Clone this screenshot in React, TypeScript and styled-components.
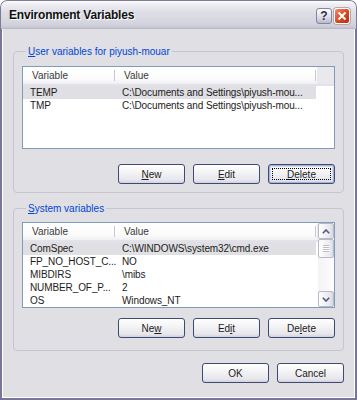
import styled, { createGlobalStyle } from 'styled-components';

const GlobalStyle = createGlobalStyle`
    html, body {
        margin: 0;
        padding: 0;
        background: #ffffff;
    }
    body {
        font-family: "Liberation Sans", Arial, sans-serif;
        font-size: 10px;
        color: #1c1c1c;
    }
    * {
        box-sizing: border-box;
    }
`;

interface IVariable {
    name: string;
    value: string;
}

const userVars: IVariable[] = [
    { name: 'TEMP', value: 'C:\\Documents and Settings\\piyush-mou...' },
    { name: 'TMP', value: 'C:\\Documents and Settings\\piyush-mou...' },
];

const systemVars: IVariable[] = [
    { name: 'ComSpec', value: 'C:\\WINDOWS\\system32\\cmd.exe' },
    { name: 'FP_NO_HOST_C...', value: 'NO' },
    { name: 'MIBDIRS', value: '\\mibs' },
    { name: 'NUMBER_OF_P...', value: '2' },
    { name: 'OS', value: 'Windows_NT' },
];

const Chevron = ({ down }: { down?: boolean }) => (
    <svg width="8" height="5" viewBox="0 0 8 5">
        <path
            d={down ? 'M0.8 0.8 L4 4 L7.2 0.8' : 'M0.8 4.2 L4 1 L7.2 4.2'}
            stroke="#4a5a80"
            strokeWidth="1.6"
            fill="none"
        />
    </svg>
);

interface IListProps {
    rows: IVariable[];
    height: number;
    scroll?: boolean;
}

const VariableList = ({ rows, height, scroll }: IListProps) => (
    <ListView $height={height}>
        <ListMain>
            <ListHeader>
                <HeaderCell $width={92}>Variable</HeaderCell>
                <HeaderCell $width={201}>Value</HeaderCell>
                <HeaderFiller />
            </ListHeader>
            {rows.map((row, i) => (
                <Row key={row.name} $selected={i === 0}>
                    <Cell $width={92}>{row.name}</Cell>
                    <Cell $width={201}>{row.value}</Cell>
                </Row>
            ))}
        </ListMain>
        {scroll && (
            <Scrollbar>
                <ScrollButton>
                    <Chevron />
                </ScrollButton>
                <ScrollThumb>
                    <Grip />
                </ScrollThumb>
                <ScrollTrack />
                <ScrollButton>
                    <Chevron down />
                </ScrollButton>
            </Scrollbar>
        )}
    </ListView>
);

export default function App() {
    return (
        <>
            <GlobalStyle />
            <Window>
                <TitleBar>
                    <TitleText>Environment Variables</TitleText>
                    <TitleButtons>
                        <HelpButton>?</HelpButton>
                        <CloseButton>
                            <svg width="10" height="10" viewBox="0 0 10 10">
                                <path
                                    d="M1.5 1.5 L8.5 8.5 M8.5 1.5 L1.5 8.5"
                                    stroke="#ffffff"
                                    strokeWidth="2"
                                />
                            </svg>
                        </CloseButton>
                    </TitleButtons>
                </TitleBar>
                <Frame>
                    <GroupBox $mt={16} $pt={8} $pb={8}>
                        <Legend>
                            <u>U</u>ser variables for piyush-mouar
                        </Legend>
                        <VariableList rows={userVars} height={83} />
                        <ButtonRow $mt={15}>
                            <Button>
                                <u>N</u>ew
                            </Button>
                            <Button>
                                <u>E</u>dit
                            </Button>
                            <Button $focused>
                                <u>D</u>elete
                            </Button>
                        </ButtonRow>
                    </GroupBox>
                    <GroupBox $mt={9} $pt={7} $pb={12}>
                        <Legend>
                            <u>S</u>ystem variables
                        </Legend>
                        <VariableList rows={systemVars} height={86} scroll />
                        <ButtonRow $mt={10}>
                            <Button>
                                Ne<u>w</u>
                            </Button>
                            <Button>
                                Ed<u>i</u>t
                            </Button>
                            <Button>
                                De<u>l</u>ete
                            </Button>
                        </ButtonRow>
                    </GroupBox>
                    <ButtonRow $mt={12}>
                        <Button>OK</Button>
                        <Button>Cancel</Button>
                    </ButtonRow>
                </Frame>
            </Window>
        </>
    );
}

const Window = styled.div`
    width: 357px;
    height: 400px;
    display: flex;
    flex-direction: column;
    border-radius: 7px 7px 0 0;
    overflow: hidden;
    background: #e0dfe3;
`;

const TitleBar = styled.div`
    height: 29px;
    flex: none;
    display: flex;
    align-items: center;
    justify-content: space-between;
    padding: 0 6px 0 8px;
    border: 1px solid #7c7c99;
    border-bottom: none;
    border-radius: 7px 7px 0 0;
    background: linear-gradient(
        to bottom,
        #ffffff 0%,
        #eeeef3 12%,
        #dedee6 40%,
        #d6d6df 75%,
        #cdcdd8 92%,
        #b4b4c6 100%
    );
`;

const TitleText = styled.span`
    font-family: "Liberation Sans", Arial, sans-serif;
    font-weight: bold;
    font-size: 12px;
    letter-spacing: -0.2px;
    color: #111111;
    text-shadow: 1px 1px 0 #ffffff;
`;

const TitleButtons = styled.div`
    display: flex;
    gap: 2px;
    margin-top: 1px;
`;

const HelpButton = styled.div`
    width: 16px;
    height: 16px;
    border: 1px solid #8585a2;
    border-radius: 3px;
    background: linear-gradient(to bottom, #ffffff, #dcdce8 60%, #b9b9cc);
    color: #2e2e4a;
    font-weight: bold;
    font-size: 12px;
    line-height: 14px;
    text-align: center;
`;

const CloseButton = styled.div`
    width: 16px;
    height: 16px;
    display: flex;
    align-items: center;
    justify-content: center;
    border: 1px solid #ffffff;
    border-radius: 3px;
    background: linear-gradient(135deg, #f08c6c, #d9471f 55%, #b82d10);
    box-shadow: 0 0 0 1px #b3a9ac;
`;

const Frame = styled.div`
    flex: 1;
    display: flex;
    flex-direction: column;
    padding: 0 11px;
    border: 2px solid #76769a;
    border-top: none;
    box-shadow: inset 1px 0 0 #ffffff, inset -1px -1px 0 #ffffff;
    background: #e0dfe3;
`;

const GroupBox = styled.fieldset<{ $mt: number; $pt: number; $pb: number }>`
    margin: ${(p) => p.$mt}px 0 0 0;
    padding: ${(p) => p.$pt}px 8px ${(p) => p.$pb}px 8px;
    min-width: 0;
    border: 1px solid #c5c4cf;
    border-radius: 4px;
    display: flex;
    flex-direction: column;
`;

const Legend = styled.legend`
    padding: 0 2px;
    margin-left: 4px;
    line-height: 13px;
    color: #0046d5;
`;

const ListView = styled.div<{ $height: number }>`
    height: ${(p) => p.$height}px;
    display: flex;
    border: 1px solid #7f9db9;
    background: #ffffff;
    overflow: hidden;
`;

const ListMain = styled.div`
    flex: 1;
    min-width: 0;
    display: flex;
    flex-direction: column;
`;

const ListHeader = styled.div`
    height: 19px;
    flex: none;
    display: flex;
    background: linear-gradient(to bottom, #ffffff 0%, #fbfbfc 70%, #f0f0f4 100%);
    border-bottom: 2px solid #e2e2ea;
    color: #3a3a3a;
`;

const HeaderCell = styled.div<{ $width: number }>`
    width: ${(p) => p.$width}px;
    flex: none;
    position: relative;
    padding-left: 9px;
    line-height: 17px;
    white-space: nowrap;
    overflow: hidden;

    &::after {
        content: '';
        position: absolute;
        right: 0;
        top: 3px;
        bottom: 3px;
        width: 1px;
        background: #c7c6d2;
        box-shadow: 1px 0 0 #ffffff;
    }
`;

const HeaderFiller = styled.div`
    flex: 1;
    margin-left: 1px;
    background: #e8e8ed;
`;

const Row = styled.div<{ $selected?: boolean }>`
    width: 293px;
    height: 13px;
    display: flex;
    background: ${(p) => (p.$selected ? '#e0dfe3' : 'transparent')};
`;

const Cell = styled.div<{ $width: number }>`
    width: ${(p) => p.$width}px;
    flex: none;
    padding-left: 7px;
    line-height: 13px;
    letter-spacing: -0.1px;
    white-space: nowrap;
`;

const Scrollbar = styled.div`
    width: 16px;
    flex: none;
    display: flex;
    flex-direction: column;
    background: linear-gradient(to right, #f3f3f6, #fdfdfe);
`;

const ScrollButton = styled.div`
    height: 16px;
    flex: none;
    display: flex;
    align-items: center;
    justify-content: center;
    border: 1px solid #b9b8c9;
    border-radius: 2px;
    background: linear-gradient(to right, #ffffff, #e9e9f0 70%, #d8d8e2);
`;

const ScrollThumb = styled.div`
    height: 19px;
    flex: none;
    display: flex;
    align-items: center;
    justify-content: center;
    border: 1px solid #b9b8c9;
    border-radius: 2px;
    background: linear-gradient(to right, #ffffff, #ececf2 70%, #dcdce5);
`;

const Grip = styled.div`
    width: 6px;
    height: 7px;
    background: repeating-linear-gradient(
        to bottom,
        #bdbcca 0px,
        #bdbcca 1px,
        #ffffff 1px,
        #ffffff 2px
    );
`;

const ScrollTrack = styled.div`
    flex: 1;
`;

const ButtonRow = styled.div<{ $mt: number }>`
    display: flex;
    justify-content: flex-end;
    gap: 8px;
    margin-top: ${(p) => p.$mt}px;
`;

const Button = styled.button<{ $focused?: boolean }>`
    width: 67px;
    height: 20px;
    position: relative;
    padding: 0;
    font-family: inherit;
    font-size: 10px;
    color: #1c1c1c;
    border: 1px solid #3d4a72;
    border-radius: 3px;
    background: linear-gradient(to bottom, #ffffff 0%, #f4f4f6 40%, #e6e5ec 85%, #d2d1dc 100%);
    box-shadow: ${(p) =>
        p.$focused ? 'inset 0 0 0 1px #aab3d6, inset 0 0 0 2px #d6dbef' : 'none'};

    &::after {
        content: '';
        display: ${(p) => (p.$focused ? 'block' : 'none')};
        position: absolute;
        inset: 3px;
        border: 1px dotted #000000;
    }
`;
